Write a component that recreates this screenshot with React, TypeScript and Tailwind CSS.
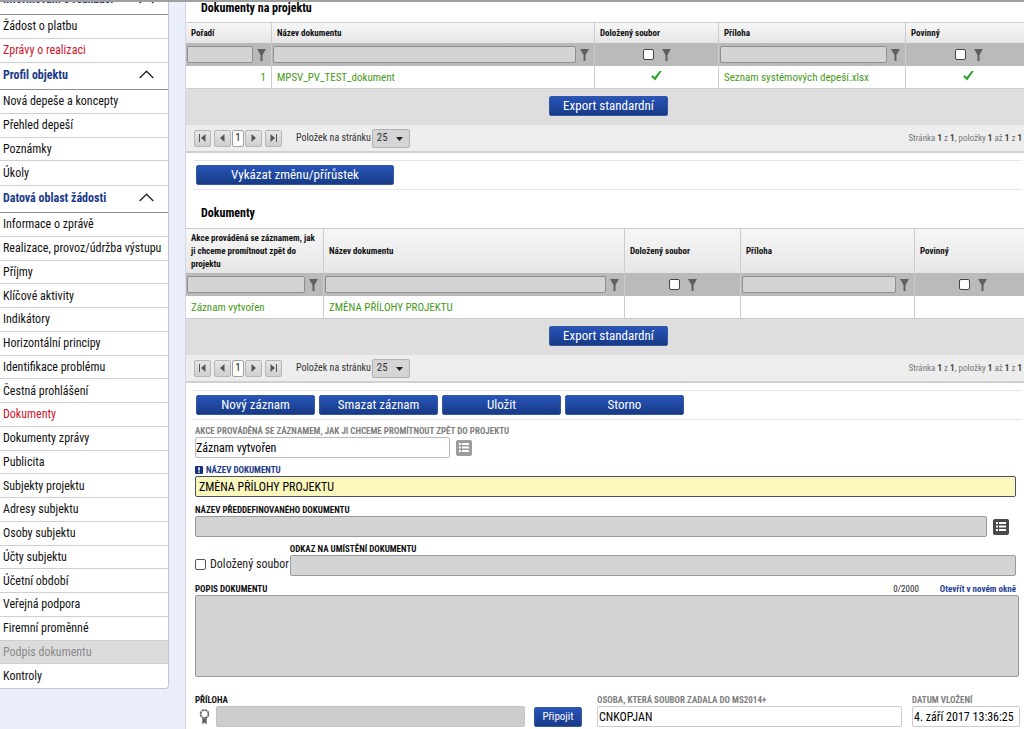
import React from "react";

const CONTENT_LINKS = ["Nová depeše a koncepty", "Přehled depeší", "Poznámky", "Úkoly"];

const DATA_LINKS = [
  "Informace o zprávě",
  "Realizace, provoz/údržba výstupu",
  "Příjmy",
  "Klíčové aktivity",
  "Indikátory",
  "Horizontální principy",
  "Identifikace problému",
  "Čestná prohlášení",
  "Dokumenty",
  "Dokumenty zprávy",
  "Publicita",
  "Subjekty projektu",
  "Adresy subjektu",
  "Osoby subjektu",
  "Účty subjektu",
  "Účetní období",
  "Veřejná podpora",
  "Firemní proměnné",
  "Podpis dokumentu",
  "Kontroly",
];

function Chevron() {
  return (
    <svg width="15" height="9" viewBox="0 0 15 9" fill="none" stroke="#222" strokeWidth="1.3">
      <path d="M0.7 8 7.5 1.2 14.3 8" />
    </svg>
  );
}

function Funnel() {
  return (
    <button type="button" aria-label="Filtr" className="shrink-0">
      <svg width="9" height="12" viewBox="0 0 9 12" className="block" fill="#5f5f5f">
        <path d="M0 0h9L5.5 6v6h-2V6z" />
      </svg>
    </button>
  );
}

function Check() {
  return (
    <svg width="11" height="10" viewBox="0 0 11 10" className="mx-auto -mt-1 block" fill="#2fa32f">
      <path d="M0 5.6 1.8 4.2 3.8 6 8.6 0H10.8L4.2 9.6z" />
    </svg>
  );
}

function ListButton({ dark = false }: { dark?: boolean }) {
  return (
    <button
      type="button"
      aria-label="Vybrat ze seznamu"
      className={`flex size-4 shrink-0 items-center justify-center rounded-xs ${dark ? "bg-[#484848]" : "bg-[#9c9c9c]"}`}
    >
      <svg width="10" height="9" viewBox="0 0 10 9" fill="#fff">
        <path d="M0 0h2v2H0zM3 0h7v2H3zM0 3.5h2v2H0zM3 3.5h7v2H3zM0 7h2v2H0zM3 7h7v2H3z" />
      </svg>
    </button>
  );
}

interface MenuGroupProps {
  links: string[];
  className: string;
}

function MenuGroup({ links, className }: MenuGroupProps) {
  return (
    <ul className={`grid auto-rows-fr ${className}`}>
      {links.map((link) => {
        const active = link === "Dokumenty" || link === "Zprávy o realizaci";
        const disabled = link === "Podpis dokumentu";
        return (
          <li
            key={link}
            className={`flex items-center border-b border-[#cfcfcf] pl-[3px] last:border-b-0 ${disabled ? "bg-[#dcdcdc]" : ""}`}
          >
            <a
              href="#"
              className={`whitespace-nowrap ${active ? "text-[#d0142c]" : disabled ? "text-[#8a8a8a]" : "text-[#111]"}`}
            >
              {link}
            </a>
          </li>
        );
      })}
    </ul>
  );
}

function MenuHeading({ children }: { children: React.ReactNode }) {
  return (
    <button
      type="button"
      className="flex h-7 w-full items-center justify-between border-t border-b border-t-[#cfcfcf] border-b-[#8f8f8f] pr-3.5 pb-[3px] pl-[3px] font-bold text-[#1b3a8a]"
    >
      {children}
      <Chevron />
    </button>
  );
}

function Sidebar() {
  return (
    <nav className="w-[169px] shrink-0 self-start rounded-br-sm border-r border-b border-[#c4c6d0] bg-white text-[12px] leading-4">
      <button
        type="button"
        className="flex h-[13px] w-full items-end overflow-hidden border-b border-[#8f8f8f] pr-3.5 pb-[7px] pl-[3px] font-bold text-[#1b3a8a]"
      >
        <span className="flex flex-1 items-center justify-between">
          Informování o realizaci
          <Chevron />
        </span>
      </button>
      <MenuGroup links={["Žádost o platbu", "Zprávy o realizaci"]} className="h-[47px]" />
      <MenuHeading>Profil objektu</MenuHeading>
      <MenuGroup links={CONTENT_LINKS} className="h-[95px]" />
      <MenuHeading>Datová oblast žádosti</MenuHeading>
      <MenuGroup links={DATA_LINKS} className="h-[475px]" />
    </nav>
  );
}

interface BlueButtonProps {
  children: React.ReactNode;
  className?: string;
}

function BlueButton({ children, className = "w-[119px] text-[13px]" }: BlueButtonProps) {
  return (
    <button
      type="button"
      className={`flex h-5 items-center justify-center rounded-xs border border-[#35599f] bg-linear-to-b from-[#2855ba] to-[#183a86] leading-4 whitespace-nowrap text-white ${className}`}
    >
      {children}
    </button>
  );
}

interface Column {
  title: string;
  width?: string;
  kind: "text" | "check";
  value?: string | boolean;
  alignRight?: boolean;
}

const PROJECT_COLUMNS: Column[] = [
  { title: "Pořadí", width: "w-[86px]", kind: "text", value: "1", alignRight: true },
  { title: "Název dokumentu", kind: "text", value: "MPSV_PV_TEST_dokument" },
  { title: "Doložený soubor", width: "w-[124px]", kind: "check", value: true },
  { title: "Příloha", width: "w-[187px]", kind: "text", value: "Seznam systémových depeší.xlsx" },
  { title: "Povinný", width: "w-[125px]", kind: "check", value: true },
];

const DOCUMENT_COLUMNS: Column[] = [
  {
    title: "Akce prováděná se záznamem, jak ji chceme promítnout zpět do projektu",
    width: "w-[138px]",
    kind: "text",
    value: "Záznam vytvořen",
  },
  { title: "Název dokumentu", kind: "text", value: "ZMĚNA PŘÍLOHY PROJEKTU" },
  { title: "Doložený soubor", width: "w-[116px]", kind: "check" },
  { title: "Příloha", width: "w-[174px]", kind: "text" },
  { title: "Povinný", width: "w-[116px]", kind: "check" },
];

function PagerButton({ label, path }: { label: string; path: string }) {
  return (
    <button
      type="button"
      aria-label={label}
      className="flex h-[17px] w-[17px] items-center justify-center rounded-xs border border-[#b5b5b5] bg-linear-to-b from-[#e6e6e6] to-[#cfcfcf]"
    >
      <svg width="7" height="8" viewBox="0 0 7 8" fill="#555">
        <path d={path} />
      </svg>
    </button>
  );
}

function Pager() {
  return (
    <div className="flex h-7 items-center border-b-2 border-[#d0d0d0] bg-[#ededed] pr-[9px] pl-2 text-[10px] leading-4">
      <PagerButton label="První stránka" path="M0 0h1v8H0zM6.5 0v8L2 4z" />
      <span className="ml-[3px] flex gap-px">
        <PagerButton label="Předchozí stránka" path="M5.5 0v8L1 4z" />
        <button
          type="button"
          className="h-[17px] w-3 rounded-xs border border-[#a0a0a0] bg-white text-[11px] leading-[14px] text-[#222]"
        >
          1
        </button>
        <PagerButton label="Další stránka" path="M1.5 0v8L6 4z" />
      </span>
      <span className="ml-[3px]">
        <PagerButton label="Poslední stránka" path="M6 0h1v8H6zM0.5 0v8L5 4z" />
      </span>
      <label className="ml-[14px] flex items-center gap-px whitespace-nowrap text-[#333]">
        Položek na stránku
        <span className="relative">
          <select className="block h-[19px] w-[38px] appearance-none rounded-xs border border-[#b0b0b0] bg-[#d5d5d5] pl-1 text-[11px] text-[#333]">
            <option>25</option>
          </select>
          <svg width="7" height="4" viewBox="0 0 7 4" className="pointer-events-none absolute top-2 right-[7px]" fill="#222">
            <path d="M0 0h7L3.5 4z" />
          </svg>
        </span>
      </label>
      <p className="ml-auto text-[9px] whitespace-nowrap text-[#777]">
        Stránka <b className="text-[#444]">1</b> z <b className="text-[#444]">1</b>, položky{" "}
        <b className="text-[#444]">1</b> až <b className="text-[#444]">1</b> z <b className="text-[#444]">1</b>
      </p>
    </div>
  );
}

function DataGrid({ columns, headerHeight }: { columns: Column[]; headerHeight: string }) {
  return (
    <div className="-mr-[7px]">
      <table className="w-full table-fixed border-separate border-spacing-0">
        <thead>
          <tr className="bg-linear-to-b from-[#f7f7f7] to-[#e6e6e6]">
            {columns.map((col) => (
              <th
                key={col.title}
                className={`border-t border-r border-[#ccc] py-0 pr-1 pl-[5px] text-left text-[9px] leading-[13px] font-bold text-[#111] last:border-r-0 ${headerHeight} ${col.width ?? ""}`}
              >
                {col.title}
              </th>
            ))}
          </tr>
          <tr className="bg-[#bababa]">
            {columns.map((col) => (
              <td key={col.title} className="h-[23px] border-r border-[#ccc] p-0 last:border-r-0">
                {col.kind === "text" ? (
                  <div className="flex items-center gap-1 pr-[5px] pl-px">
                    <input
                      type="text"
                      aria-label={`Filtr: ${col.title}`}
                      className="h-[17px] w-full min-w-0 rounded-xs border border-[#8e8e8e] bg-[#d4d4d4] px-1"
                    />
                    <Funnel />
                  </div>
                ) : (
                  <div className="flex items-center justify-center gap-2">
                    <input
                      type="checkbox"
                      aria-label={`Filtr: ${col.title}`}
                      className="size-[11px] appearance-none rounded-xs border border-[#444] bg-white"
                    />
                    <Funnel />
                  </div>
                )}
              </td>
            ))}
          </tr>
        </thead>
        <tbody>
          <tr className="bg-white text-[11px] leading-4 text-[#459a16]">
            {columns.map((col) => (
              <td
                key={col.title}
                className={`h-[22px] border-r border-[#ccc] pt-0.5 pb-0 whitespace-nowrap last:border-r-0 ${col.kind === "text" ? "px-[5px]" : "px-0"} ${col.alignRight ? "text-right" : ""}`}
              >
                {col.value === true ? <Check /> : col.value}
              </td>
            ))}
          </tr>
        </tbody>
      </table>
      <div className="flex h-[37px] items-center justify-center border-t border-[#ccc] bg-[#dedede] pb-0.5">
        <BlueButton>Export standardní</BlueButton>
      </div>
      <Pager />
    </div>
  );
}

function Toolbar({ children }: { children: React.ReactNode }) {
  return (
    <div className="mt-[7px] mr-[2px] ml-[7px] flex gap-1 border-t border-b border-[#e6e6e6] py-1 pl-[3px]">
      {children}
    </div>
  );
}

const LABEL = "block text-[9px] leading-3 font-bold whitespace-nowrap uppercase";
const FIELD = "block h-[21px] w-full min-w-0 rounded-xs border text-[12px] leading-4";
const GREY_FIELD = "border-[#9a9a9a] bg-[#d4d4d4] px-1";

function DocumentForm() {
  return (
    <form className="pt-[5px] pr-2 pb-1 pl-[9px]">
      <label htmlFor="action" className={`${LABEL} text-[#808080]`}>
        Akce prováděná se záznamem, jak ji chceme promítnout zpět do projektu
      </label>
      <div className="flex items-center gap-[6px]">
        <div className="w-[255px]">
          <input id="action" type="text" defaultValue="Záznam vytvořen" className={`${FIELD} border-[#bbb] bg-white`} />
        </div>
        <ListButton />
      </div>

      <label htmlFor="name" className={`${LABEL} mt-[6px] flex items-center gap-[3px] text-[#1b3a8a]`}>
        <svg width="8" height="8" viewBox="0 0 8 8">
          <rect width="8" height="8" rx="1" fill="#12307c" />
          <path d="M3.2 1.2h1.6v3.3H3.2zM3.2 5.4h1.6v1.4H3.2z" fill="#fff" />
        </svg>
        Název dokumentu
      </label>
      <input
        id="name"
        type="text"
        defaultValue="ZMĚNA PŘÍLOHY PROJEKTU"
        className={`${FIELD} border-[#4a4f6a] bg-[#fcf8bd] px-[3px]`}
      />

      <label htmlFor="predefined" className={`${LABEL} mt-[7px] text-[#111]`}>
        Název předdefinovaného dokumentu
      </label>
      <div className="flex items-center gap-[6px] pr-[7px]">
        <input id="predefined" type="text" className={`${FIELD} ${GREY_FIELD}`} />
        <ListButton dark />
      </div>

      <div className="mt-[6px] flex items-end">
        <label className="flex items-center gap-1 pb-1 text-[12px] leading-4 whitespace-nowrap text-[#222]">
          <input type="checkbox" className="size-[11px] appearance-none rounded-xs border border-[#555] bg-white" />
          Doložený soubor
        </label>
        <div className="ml-px flex-1">
          <label htmlFor="location" className={`${LABEL} text-[#111]`}>
            Odkaz na umístění dokumentu
          </label>
          <input id="location" type="text" className={`${FIELD} ${GREY_FIELD}`} />
        </div>
      </div>

      <div className="mt-[7px] flex items-center text-[9px] leading-3">
        <label htmlFor="description" className={`${LABEL} text-[#111]`}>
          Popis dokumentu
        </label>
        <span className="mr-[21px] ml-auto text-[#222]">0/2000</span>
        <a href="#" className="font-bold text-[#1f4394]">
          Otevřít v novém okně
        </a>
      </div>
      <div className="-mr-[3px]">
        <textarea
          id="description"
          className="block h-[82px] w-full resize-none rounded-xs border border-[#9a9a9a] bg-[#d4d4d4] p-1 text-[12px]"
        />
      </div>

      <div className="-mr-1 mt-[17px] flex items-end">
        <div className="w-[330px]">
          <label htmlFor="attachment" className={`${LABEL} text-[#111]`}>
            Příloha
          </label>
          <div className="flex items-center gap-[6px] pl-1">
            <svg width="11" height="16" viewBox="0 0 11 16" className="shrink-0">
              <circle cx="5.5" cy="5" r="4" fill="none" stroke="#606060" strokeWidth="1.6" strokeDasharray="2.6 0.5" />
              <path d="M3.3 9.2h4.4V15.5L5.5 13.6 3.3 15.5z" fill="#606060" />
            </svg>
            <input id="attachment" type="text" className={`${FIELD} border-[#c4c4c4] bg-[#cdcdcd] px-1`} />
          </div>
        </div>
        <BlueButton className="ml-[9px] w-12 text-[11px]">Připojit</BlueButton>
        <div className="ml-[15px] flex-1">
          <label htmlFor="person" className={`${LABEL} text-[#808080]`}>
            Osoba, která soubor zadala do MS2014+
          </label>
          <input id="person" type="text" defaultValue="CNKOPJAN" className={`${FIELD} border-[#ccc] bg-white px-px`} />
        </div>
        <div className="ml-[10px] w-[108px]">
          <label htmlFor="inserted" className={`${LABEL} text-[#808080]`}>
            Datum vložení
          </label>
          <input
            id="inserted"
            type="text"
            defaultValue="4. září 2017 13:36:25"
            className={`${FIELD} border-[#ccc] bg-white px-px`}
          />
        </div>
      </div>
    </form>
  );
}

export default function App() {
  return (
    <div className="flex min-h-screen border-t-2 border-[#a0a0a0] bg-[#ebeffc] font-['Roboto_Condensed','Liberation_Sans_Narrow',Roboto,sans-serif]">
      <Sidebar />
      <main className="ml-4 min-w-0 flex-1 overflow-hidden border-l border-[#d3d5e0] bg-white">
        <h2 className="pb-2 pl-[15px] text-[12px] leading-3 font-bold">Dokumenty na projektu</h2>
        <DataGrid columns={PROJECT_COLUMNS} headerHeight="h-[21px]" />
        <Toolbar>
          <BlueButton className="w-[198px] text-[13px]">Vykázat změnu/přírůstek</BlueButton>
        </Toolbar>
        <h2 className="pt-[17px] pb-[9px] pl-[15px] text-[12px] leading-3 font-bold">Dokumenty</h2>
        <DataGrid columns={DOCUMENT_COLUMNS} headerHeight="h-[45px]" />
        <Toolbar>
          <BlueButton>Nový záznam</BlueButton>
          <BlueButton>Smazat záznam</BlueButton>
          <BlueButton>Uložit</BlueButton>
          <BlueButton>Storno</BlueButton>
        </Toolbar>
        <DocumentForm />
      </main>
    </div>
  );
}
